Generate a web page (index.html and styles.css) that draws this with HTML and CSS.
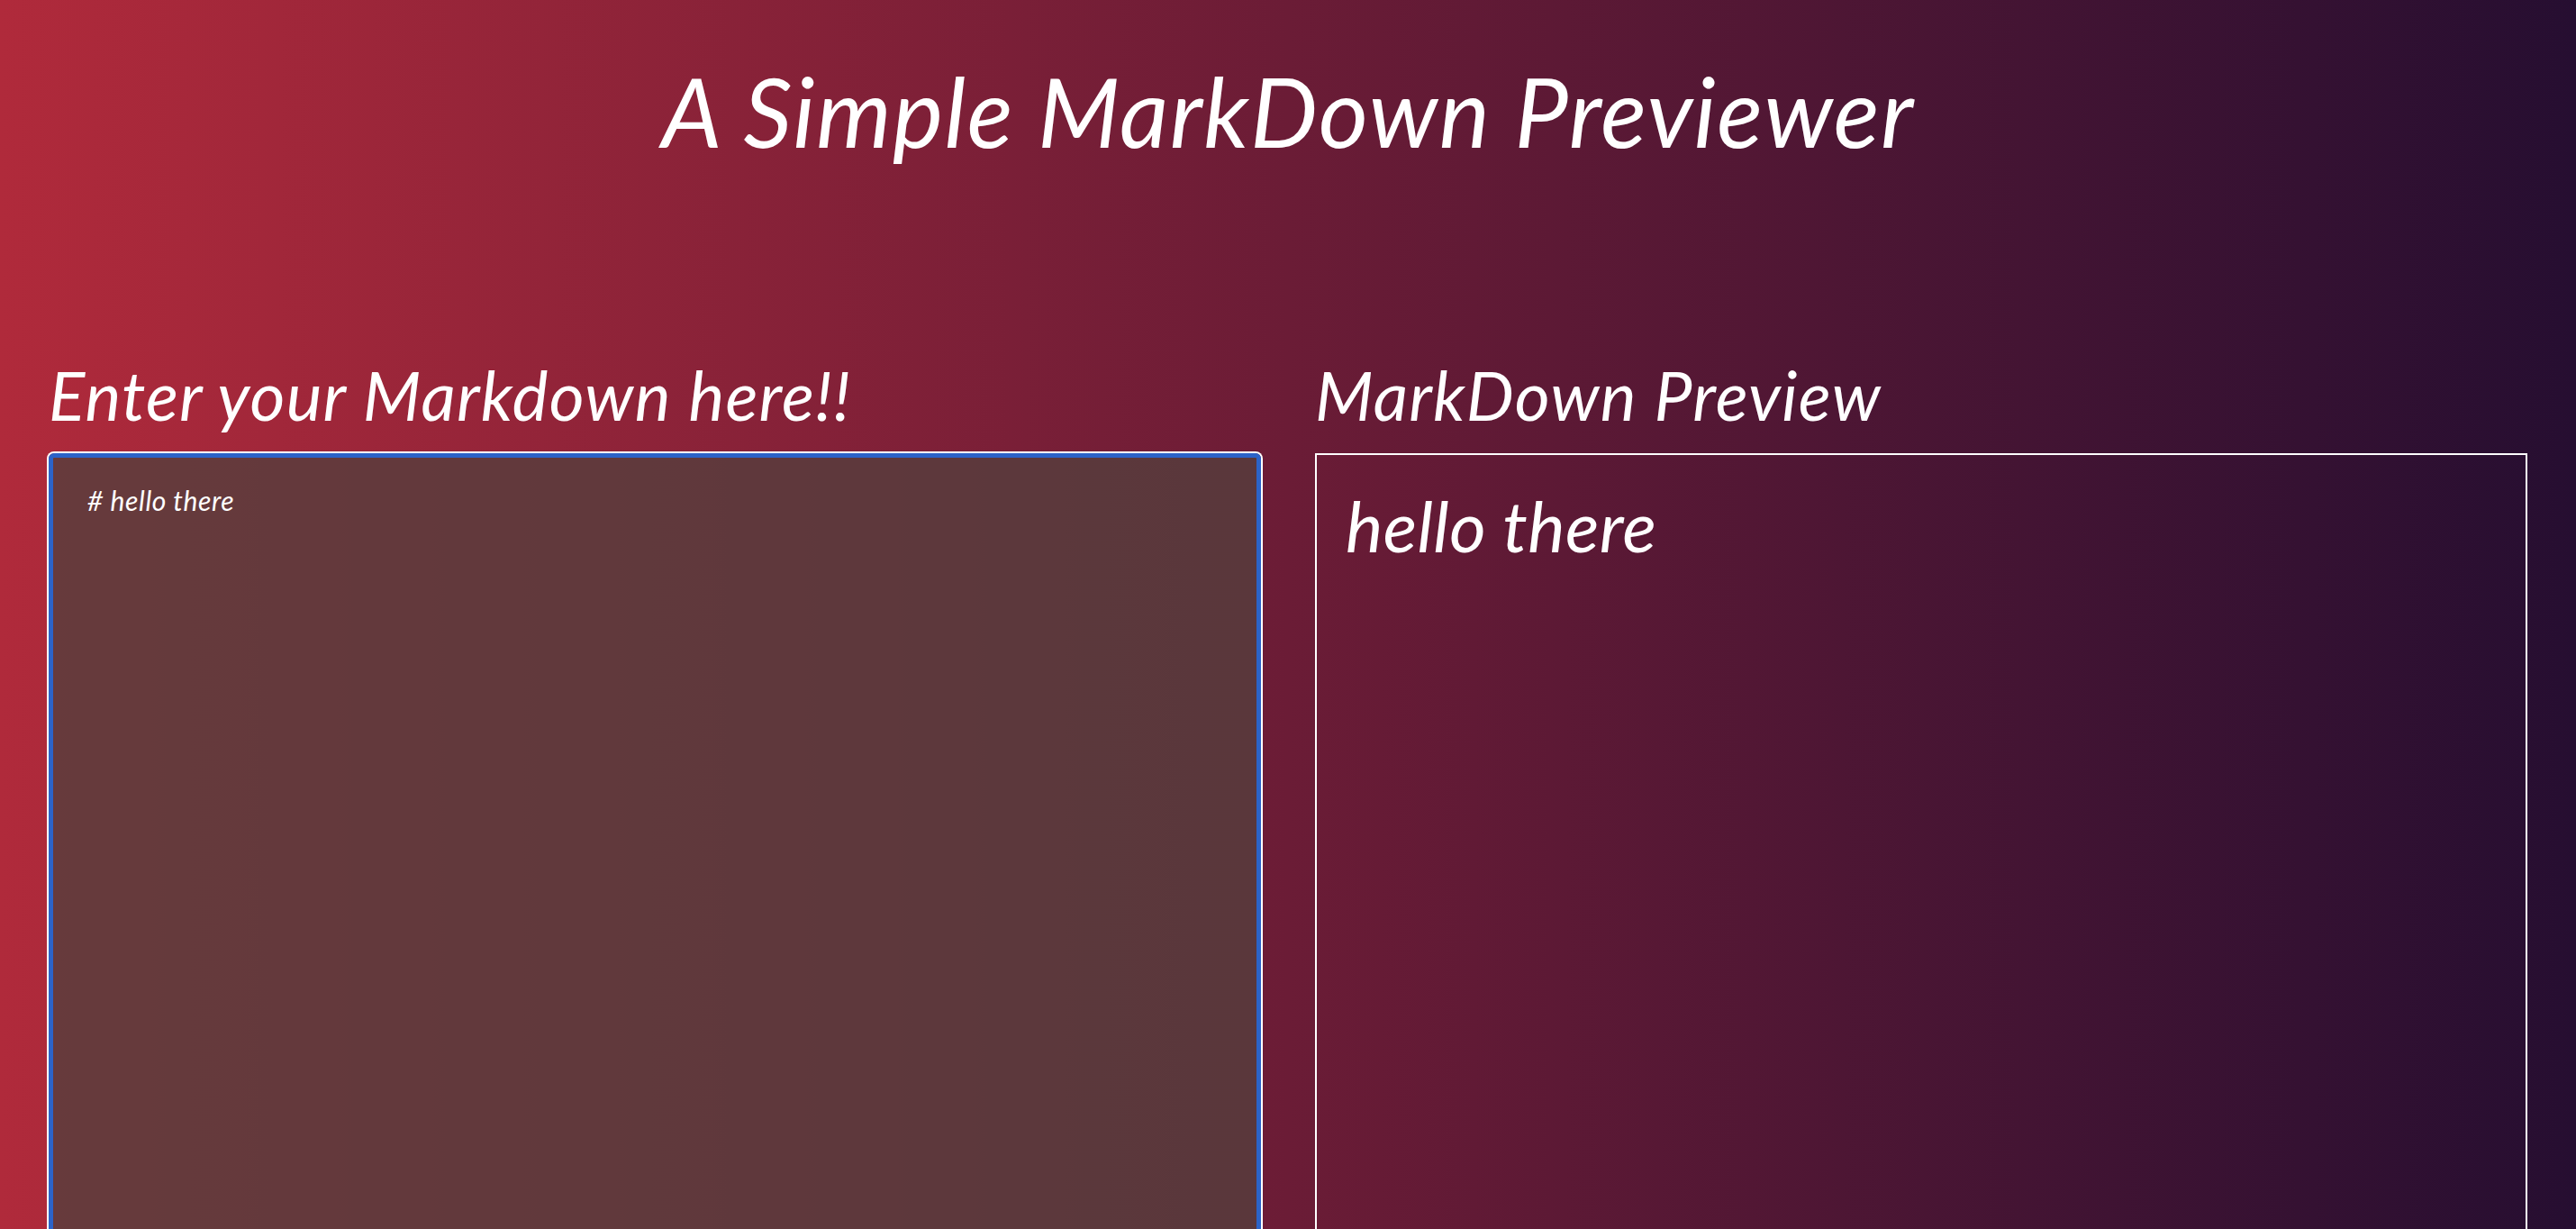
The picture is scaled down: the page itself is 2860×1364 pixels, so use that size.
FILE: index.html
```html
<!DOCTYPE html>
<html lang="en">
<head>
<meta charset="utf-8">
<title>A Simple MarkDown Previewer</title>
<link rel="stylesheet" href="styles.css">
</head>
<body>
<main class="page">
  <h1 class="title">A Simple MarkDown Previewer</h1>
  <section class="panes">
    <div class="pane">
      <h2 class="pane-title">Enter your Markdown here!!</h2>
      <textarea class="editor" id="editor" spellcheck="false"># hello there</textarea>
    </div>
    <div class="pane">
      <h2 class="pane-title">MarkDown Preview</h2>
      <div class="preview">
        <h1 class="preview-h1">hello there</h1>
      </div>
    </div>
  </section>
</main>
<script src="script.js"></script>
</body>
</html>
```

FILE: styles.css
```css
html {
  overflow: hidden;
  background: linear-gradient(to right, #b02a3b 0%, #260e31 100%);
  min-height: 100%;
}
body {
  margin: 0;
  color: #ffffff;
  font-family: "Lato", "Open Sans", sans-serif;
  font-style: italic;
}
.page {
  padding: 70px 54px 0;
}
.title {
  margin: 0;
  font-size: 106px;
  line-height: 1;
  font-weight: 400;
  letter-spacing: 1.4px;
  text-align: center;
}
.panes {
  display: grid;
  grid-template-columns: 1fr 1fr;
  gap: 60px;
  margin-top: 225px;
}
.pane {
  display: flex;
  flex-direction: column;
}
.pane-title {
  margin: 0 0 27px;
  font-size: 75px;
  line-height: 1;
  font-weight: 400;
  letter-spacing: 1.2px;
}
.editor {
  box-sizing: border-box;
  height: 1000px;
  margin: 0;
  padding: 29px 38px;
  border: 5px solid #2c63c8;
  border-radius: 6px;
  box-shadow: 0 0 0 2px #ffffff;
  outline: none;
  resize: none;
  background: rgba(85, 63, 61, 0.8);
  color: #ffffff;
  caret-color: #ffffff;
  font-family: "Lato", "Open Sans", sans-serif;
  font-style: italic;
  font-size: 30px;
  line-height: 1.2;
  letter-spacing: 0.6px;
}
.preview {
  box-sizing: border-box;
  height: 1000px;
  border: 2px solid #ffffff;
  padding: 39px 32px;
}
.preview-h1 {
  margin: 0;
  font-size: 78px;
  line-height: 1;
  font-weight: 400;
  letter-spacing: 0.4px;
}
```

FILE: script.js
```js
var editor = document.getElementById('editor');
editor.focus();
editor.setSelectionRange(editor.value.length, editor.value.length);
```
